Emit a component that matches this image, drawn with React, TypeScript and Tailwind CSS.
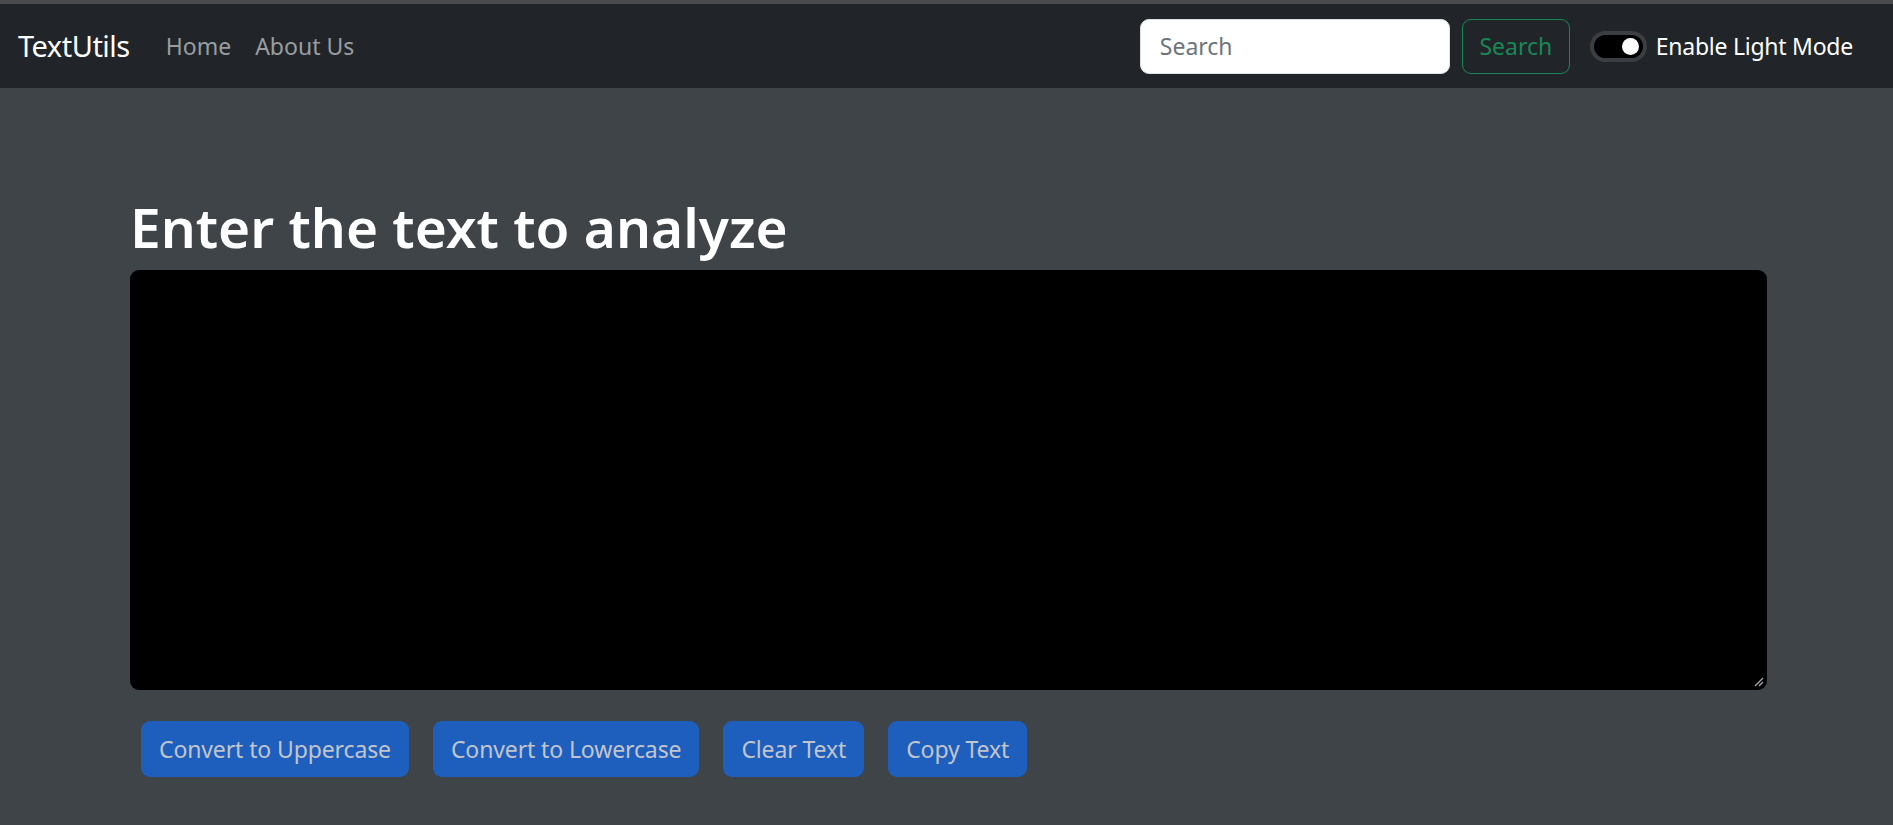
import { useState } from 'react';

const font = "font-['Segoe_UI','Noto_Sans','Open_Sans',sans-serif]";

function Navbar() {
  const [light, setLight] = useState(false);
  return (
    <nav className="h-[84px] bg-[#212529] flex items-center pl-[18px] pr-[40px]">
      <span className="text-[29px] text-white mr-[24px] tracking-[-0.5px]">TextUtils</span>
      <ul className="flex items-center">
        <li className="px-[12px] text-[23px] text-[#9a9da0]">Home</li>
        <li className="px-[12px] text-[23px] text-[#9a9da0]">About Us</li>
      </ul>
      <div className="ml-auto flex items-center">
        <input
          placeholder="Search"
          className="w-[310px] h-[55px] rounded-[9px] bg-white border border-[#dee2e6] px-[19px] text-[23px] text-[#212529] placeholder:text-[#6c757d] outline-none"
        />
        <button className="ml-[12px] w-[108px] h-[55px] rounded-[9px] border border-[#198754] text-[#198754] text-[23px]">
          Search
        </button>
        <label className="ml-[20px] flex items-center gap-[9px] text-white text-[23px] tracking-[-0.25px]">
          <span
            onClick={() => setLight(!light)}
            className="w-[57px] h-[31px] rounded-full bg-[#3b3f44] p-[4px] flex"
          >
            <span className="flex-1 rounded-full bg-black flex items-center justify-end pr-[4px]">
              <span className="w-[17px] h-[17px] rounded-full bg-white" />
            </span>
          </span>
          Enable Light Mode
        </label>
      </div>
    </nav>
  );
}

export default function App() {
  const [text, setText] = useState('');
  const buttons = ['Convert to Uppercase', 'Convert to Lowercase', 'Clear Text', 'Copy Text'];

  return (
    <div className={`min-h-[825px] bg-[#3f4448] ${font}`}>
      <div className="h-[4px] bg-[#4a4a4a]" />
      <Navbar />
      <main className="w-[1637px] ml-[130px] pt-[106px]">
        <h1 className="text-[55px] leading-[66px] font-semibold text-white mb-[10px]">Enter the text to analyze</h1>
        <div className="relative">
          <textarea
            value={text}
            onChange={(e) => setText(e.target.value)}
            className="block w-full h-[420px] bg-black text-white rounded-[9px] p-[18px] text-[24px] outline-none resize-none"
          />
          <svg className="absolute right-[3px] bottom-[3px] pointer-events-none" width="10" height="10" viewBox="0 0 10 10">
            <path d="M1 9L9 1M5 9L9 5" stroke="#a8a8a8" strokeWidth="1.3" />
          </svg>
        </div>
        <div className="flex gap-[24px] mt-[31px] pl-[11px]">
          {buttons.map((b) => (
            <button
              key={b}
              disabled
              className="h-[56px] px-[18px] rounded-[9px] bg-[#1e5fbe] text-[#c2c5cb] text-[23px] tracking-[-0.12px]"
            >
              {b}
            </button>
          ))}
        </div>
      </main>
    </div>
  );
}
